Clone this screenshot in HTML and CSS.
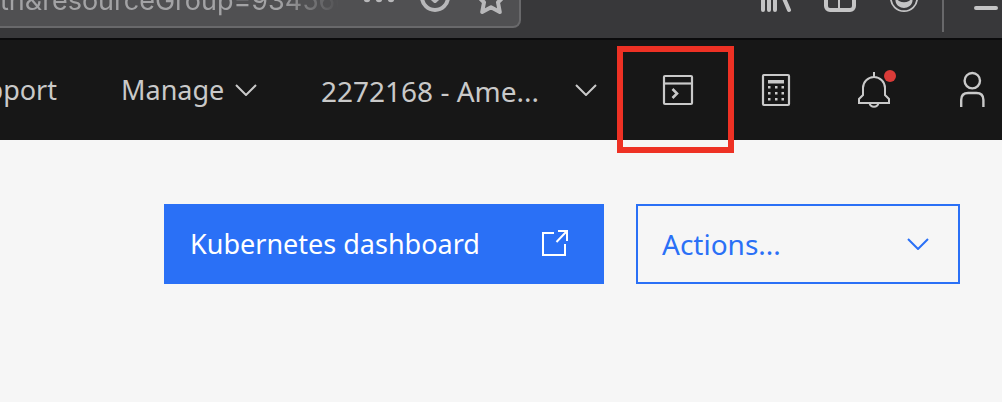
FILE: index.html
```html
<!DOCTYPE html>
<html lang="en">
<head>
<meta charset="utf-8">
<title>Cluster console</title>
<meta name="viewport" content="width=device-width, initial-scale=1">
<link rel="stylesheet" href="styles.css">
</head>
<body>
<div class="browser">
  <div class="browser-row">
    <div class="address">
      <input class="address-input" type="text" aria-label="Address" value="th&amp;resourceGroup=93456c">
      <button class="tool" type="button" aria-label="Page actions">
        <svg width="32" height="32" viewBox="0 0 32 32" fill="currentColor"><circle cx="4" cy="15" r="3.3"/><circle cx="16" cy="15" r="3.3"/><circle cx="28" cy="15" r="3.3"/></svg>
      </button>
      <button class="tool" type="button" aria-label="Save to Pocket">
        <svg width="32" height="32" viewBox="0 0 32 32" fill="none" stroke="currentColor" stroke-width="4" stroke-linecap="round" stroke-linejoin="round"><path d="M3 3H29V13A13 13 0 0 1 3 13Z"/><path d="M10 11.500L16 17L22 11.500"/></svg>
      </button>
      <button class="tool" type="button" aria-label="Bookmark this page">
        <svg width="32" height="32" viewBox="0 0 32 32" fill="none" stroke="currentColor" stroke-width="4" stroke-linejoin="round"><path d="M16 1L20.300 10.200L30 11.500L23 18.300L24.800 28L16 23.300L7.200 28L9 18.300L2 11.500L11.700 10.200Z"/></svg>
      </button>
    </div>
    <div class="browser-tools">
      <button class="tool" type="button" aria-label="Library">
        <svg width="32" height="32" viewBox="0 0 32 32" fill="none" stroke="currentColor" stroke-width="4" stroke-linecap="round"><path d="M3 2V26M9 2V26M15 2V26M19.500 4L29 26"/></svg>
      </button>
      <button class="tool" type="button" aria-label="Sidebars">
        <svg width="32" height="32" viewBox="0 0 32 32" fill="none" stroke="currentColor" stroke-width="4"><rect x="2" y="2" width="28" height="24" rx="4"/><path d="M15 2V26" stroke-width="2"/></svg>
      </button>
      <button class="tool" type="button" aria-label="Account">
        <svg width="32" height="32" viewBox="0 0 32 32"><circle cx="16" cy="14" r="13.200" fill="none" stroke="currentColor" stroke-width="1.800"/><path d="M7.500 15.500Q9 15 11 17Q16 19.500 21 17Q23 15 24.500 15.500C25 21 20 24 16 24S7 21 7.500 15.500Z" fill="currentColor"/></svg>
      </button>
    </div>
    <div class="browser-menu">
      <button class="tool" type="button" aria-label="Open menu">
        <svg width="30" height="32" viewBox="0 0 30 32" stroke="currentColor" stroke-width="4" stroke-linecap="round"><path d="M4 3H24M4 13H24M4 24H24"/></svg>
      </button>
    </div>
  </div>
</div>

<header class="header">
  <nav class="nav" aria-label="Main">
    <a class="nav-item" href="#support">Support</a>
    <button class="nav-item manage" type="button" aria-haspopup="true"><span>Manage</span>
      <svg class="chevron" width="22" height="12" viewBox="0 0 22 12"><path d="M1 1L11 11L21 1"/></svg>
    </button>
    <button class="nav-item account" type="button" aria-haspopup="true"><span class="account-name">2272168 - Ame...</span>
      <svg class="chevron" width="22" height="12" viewBox="0 0 22 12"><path d="M1 1L11 11L21 1"/></svg>
    </button>
  </nav>
  <div class="utilities">
    <button class="utility marked" type="button" aria-label="Cloud Shell">
      <svg width="40" height="40" viewBox="0 0 40 40" fill="none" stroke="currentColor" stroke-width="2.200"><rect x="6" y="6" width="28" height="28" rx="1"/><path d="M6 13.500H34"/><path d="M14.500 19L19 23.500L14.500 28" stroke-width="2.600"/></svg>
    </button>
    <button class="utility" type="button" aria-label="Cost estimator">
      <svg width="40" height="40" viewBox="0 0 40 40" fill="currentColor"><rect x="7" y="5" width="26" height="30" rx="1" fill="none" stroke="currentColor" stroke-width="2.200"/><path d="M12 10H28V13.500H12ZM12 16H14.500V18.500H12ZM19 16H21.500V18.500H19ZM25.500 16H28V18.500H25.500ZM12 22H14.500V24.500H12ZM19 22H21.500V24.500H19ZM25.500 22H28V24.500H25.500ZM12 28H14.500V30.500H12ZM19 28H21.500V30.500H19ZM25.500 28H28V30.500H25.500Z"/></svg>
    </button>
    <button class="utility" type="button" aria-label="Notifications">
      <svg width="46" height="40" viewBox="0 0 46 40" fill="none" stroke="currentColor" stroke-width="2"><path d="M23 2V6.500M12 18A11 11 0 0 1 34 18V25L38 29V33H8V29L12 25ZM18.500 33A4.600 4.600 0 0 0 27.500 33"/><circle cx="39" cy="6" r="6" fill="#da3b38" stroke="none"/></svg>
    </button>
    <button class="utility" type="button" aria-label="Profile">
      <svg width="40" height="40" viewBox="0 0 40 40" fill="none" stroke="currentColor" stroke-width="2.400"><circle cx="20.300" cy="10.700" r="7.700"/><path d="M9.200 37V30Q9.200 23 16.200 23H24.400Q31.400 23 31.400 30V37"/></svg>
    </button>
  </div>
</header>

<main class="content">
  <button class="dashboard" type="button"><span>Kubernetes dashboard</span>
    <svg width="28" height="28" viewBox="0 0 28 28" fill="none" stroke="currentColor" stroke-width="2"><path d="M13 3H2V25H24V14M17 1H26V11M25.500 1.500L15.500 12"/></svg>
  </button>
  <div class="actions">
    <select class="actions-select" aria-label="Actions">
      <option>Actions...</option>
    </select>
    <svg class="chevron actions-chevron" width="22" height="12" viewBox="0 0 22 12"><path d="M1 1L11 11L21 1"/></svg>
  </div>
</main>
</body>
</html>
```
FILE: styles.css
```css
* {
  box-sizing: border-box;
}

body {
  margin: 0;
  min-height: 100vh;
  background: #f6f6f6;
  font-family: "Noto Sans", "Open Sans", sans-serif;
  font-size: 28px;
  line-height: 40px;
}

button,
select,
input {
  margin: 0;
  padding: 0;
  border: 0;
  border-radius: 0;
  background: none;
  color: inherit;
  font: inherit;
}

svg {
  display: block;
  flex: none;
}

.browser {
  display: flex;
  align-items: flex-end;
  height: 40px;
  overflow: hidden;
  background: #38383a;
  border-bottom: 2px solid #0b0b0c;
  color: #c4c4c5;
}

.browser-row {
  display: flex;
  flex: 1;
  align-items: center;
  height: 76px;
  min-width: 0;
}

.address {
  display: flex;
  flex: 1;
  align-items: center;
  gap: 24px;
  height: 56px;
  min-width: 0;
  margin-right: 239px;
  padding-right: 12px;
  border: 2px solid #69696b;
  border-left: 0;
  border-radius: 0 8px 8px 0;
  background: #505052;
  color: #b8b8ba;
}

.address-input {
  flex: 1;
  min-width: 0;
  height: 52px;
  color: #a3a3a5;
  font-family: Inter, "Liberation Sans", sans-serif;
  font-size: 27px;
  -webkit-mask-image: linear-gradient(to left, transparent, #000 60px);
  mask-image: linear-gradient(to left, transparent, #000 60px);
}

.browser-tools {
  display: flex;
  gap: 32px;
  padding-right: 22px;
}

.browser-menu {
  display: flex;
  align-items: center;
  height: 64px;
  padding-left: 28px;
  border-left: 2px solid #68686a;
}

.header {
  display: flex;
  align-items: center;
  justify-content: flex-end;
  gap: 51px;
  height: 100px;
  background: #171717;
  color: #c9c9c9;
}

.nav {
  display: flex;
  flex: 1;
  justify-content: flex-end;
  gap: 64px;
  min-width: 0;
  overflow: hidden;
}

.nav-item {
  display: flex;
  flex: none;
  align-items: center;
  justify-content: space-between;
  color: inherit;
  font-size: 27px;
  text-decoration: none;
  white-space: nowrap;
}

.manage {
  min-width: 136px;
}

.account {
  min-width: 276px;
  font-size: 28px;
}

.account-name {
  padding-top: 2px;
}

.chevron {
  fill: none;
  stroke: currentColor;
  stroke-width: 2;
}

.utilities {
  display: flex;
  flex: none;
  gap: 38px;
}

.utility {
  position: relative;
  display: flex;
  align-items: center;
  justify-content: center;
  width: 60px;
  height: 60px;
}

.marked::after {
  content: "";
  position: absolute;
  inset: -14px -26px -33px -31px;
  border: 6px solid #ee3124;
}

.content {
  display: flex;
  flex-wrap: wrap;
  justify-content: flex-end;
  gap: 32px;
  padding: 64px 42px;
}

.dashboard {
  display: flex;
  align-items: center;
  justify-content: space-between;
  width: 440px;
  height: 80px;
  padding: 0 35px 0 26px;
  background: #2a70f6;
  color: #fff;
  font-size: 27px;
}

.actions {
  position: relative;
  width: 324px;
  color: #2a70f6;
}

.actions-select {
  width: 100%;
  height: 80px;
  padding: 0 64px 0 24px;
  border: 2px solid #2a70f6;
  appearance: none;
}

.actions-chevron {
  position: absolute;
  top: 34px;
  right: 31px;
  pointer-events: none;
}
```
